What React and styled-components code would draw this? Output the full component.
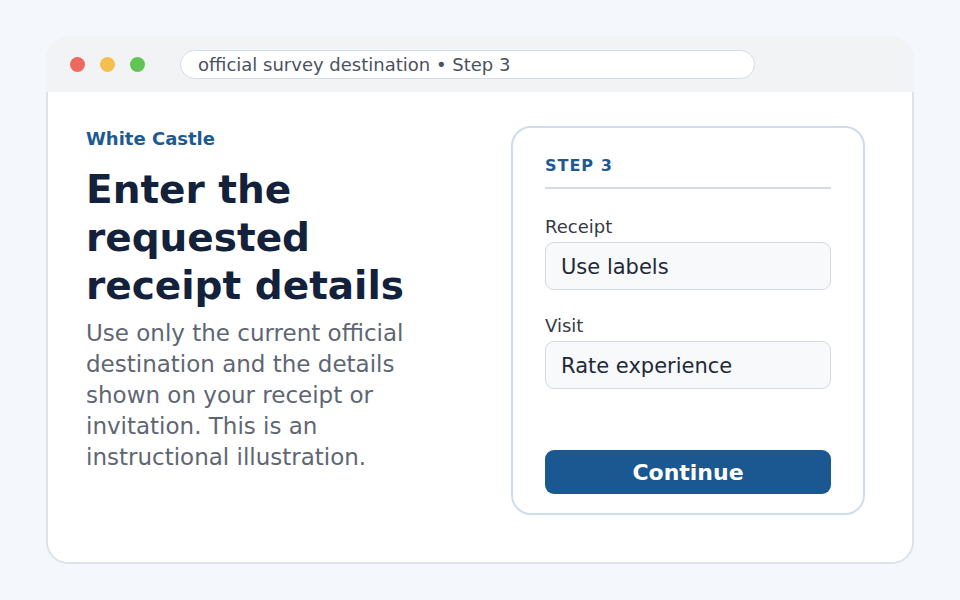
import styled, { createGlobalStyle } from 'styled-components';

const GlobalStyle = createGlobalStyle`
  html, body {
    margin: 0;
    background: #f4f8fd;
    font-family: "DejaVu Sans", "Liberation Sans", sans-serif;
  }
`;

const Page = styled.div`
  padding: 36px 46px;
`;

const BrowserWindow = styled.div`
  height: 528px;
  display: flex;
  flex-direction: column;
`;

const TitleBar = styled.div`
  height: 56px;
  flex-shrink: 0;
  display: flex;
  align-items: center;
  padding: 0 24px;
  background: #f1f3f5;
  border-radius: 22px 22px 0 0;
`;

const Dots = styled.div`
  display: flex;
  gap: 15px;
`;

const Dot = styled.span`
  width: 15px;
  height: 15px;
  border-radius: 50%;
  background: ${(p) => p.color};
`;

const AddressBar = styled.div`
  margin-left: 35px;
  width: 575px;
  height: 29px;
  box-sizing: border-box;
  display: flex;
  align-items: center;
  padding: 0 17px;
  background: #fff;
  border: 1px solid #d6dce4;
  border-radius: 15px;
  color: #4a5260;
  font-size: 18px;
  white-space: nowrap;
`;

const Body = styled.div`
  flex: 1;
  display: grid;
  grid-template-columns: 1fr 354px;
  gap: 24px;
  padding: 34px 47px 47px 38px;
  background: #fff;
  border: 2px solid #dde3ea;
  border-top: none;
  border-radius: 0 0 22px 22px;
`;

const Intro = styled.div`
  max-width: 370px;
  padding-top: 1px;
`;

const Brand = styled.div`
  font-size: 18px;
  line-height: 24px;
  font-weight: bold;
  color: #1d5a92;
`;

const Heading = styled.h1`
  margin: 15px 0 0;
  font-size: 39px;
  line-height: 48px;
  font-weight: bold;
  color: #13213a;
`;

const Lead = styled.p`
  margin: 8px 0 0;
  font-size: 23px;
  line-height: 31px;
  color: #5e6673;
`;

const Card = styled.div`
  display: flex;
  flex-direction: column;
  padding: 28px 32px 19px;
  border: 2px solid #cfdcec;
  border-radius: 20px;
  background: #fff;
`;

const StepTitle = styled.div`
  font-size: 16px;
  line-height: 20px;
  font-weight: bold;
  letter-spacing: 1px;
  color: #1d5a92;
  padding-bottom: 11px;
  border-bottom: 2px solid #cfdcec;
`;

const Field = styled.label`
  display: flex;
  flex-direction: column;
  gap: 4px;
  margin-top: ${(p) => p.$top}px;
`;

const FieldLabel = styled.span`
  font-size: 18px;
  line-height: 22px;
  color: #343a44;
`;

const FieldBox = styled.div`
  height: 48px;
  box-sizing: border-box;
  display: flex;
  align-items: center;
  padding: 1px 15px 0;
  background: #f7f9fb;
  border: 1.5px solid #d3d9e1;
  border-radius: 9px;
  font-size: 21px;
  color: #1f2937;
`;

const ContinueButton = styled.button`
  margin-top: auto;
  height: 44px;
  border: none;
  border-radius: 9px;
  background: #1b5791;
  color: #fff;
  font-family: inherit;
  font-size: 22px;
  font-weight: bold;
  cursor: pointer;
`;

const fields = [
  { label: 'Receipt', value: 'Use labels', top: 27 },
  { label: 'Visit', value: 'Rate experience', top: 25 },
];

export default function App() {
  return (
    <Page>
      <GlobalStyle />
      <BrowserWindow>
        <TitleBar>
          <Dots>
            <Dot color="#ec6a5e" />
            <Dot color="#f4bf4f" />
            <Dot color="#61c554" />
          </Dots>
          <AddressBar>official survey destination • Step 3</AddressBar>
        </TitleBar>
        <Body>
          <Intro>
            <Brand>White Castle</Brand>
            <Heading>Enter the requested receipt details</Heading>
            <Lead>
              Use only the current official destination and the details shown on your receipt or
              invitation. This is an instructional illustration.
            </Lead>
          </Intro>
          <Card>
            <StepTitle>STEP 3</StepTitle>
            {fields.map((f) => (
              <Field key={f.label} $top={f.top}>
                <FieldLabel>{f.label}</FieldLabel>
                <FieldBox>{f.value}</FieldBox>
              </Field>
            ))}
            <ContinueButton>Continue</ContinueButton>
          </Card>
        </Body>
      </BrowserWindow>
    </Page>
  );
}
